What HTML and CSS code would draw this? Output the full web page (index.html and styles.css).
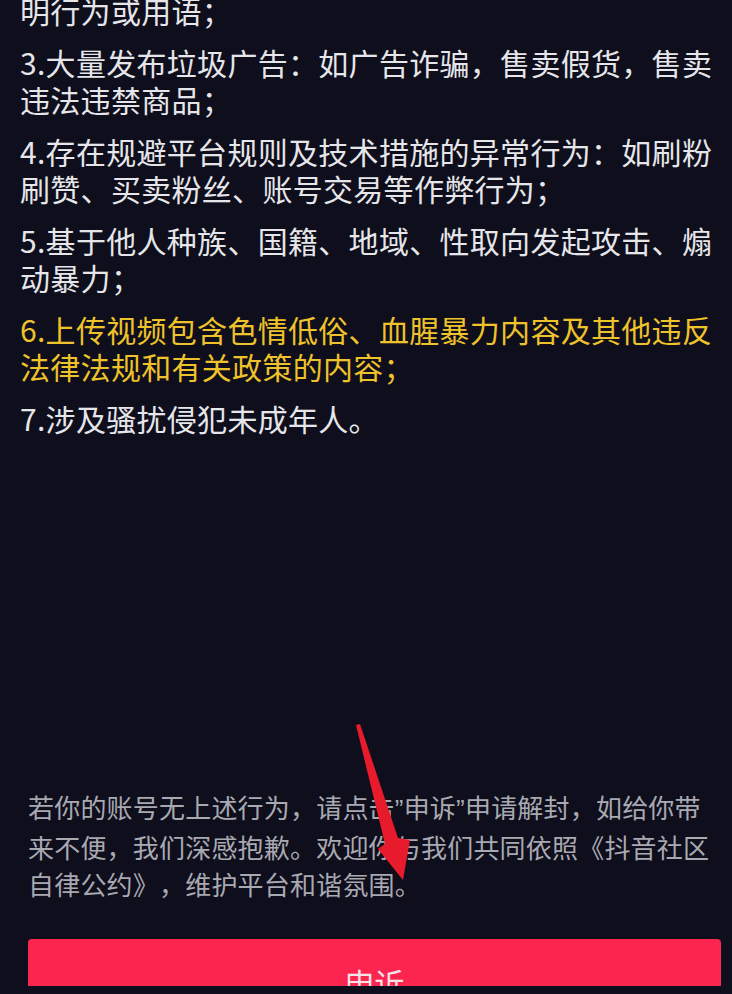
FILE: index.html
```html
<!DOCTYPE html>
<html lang="zh-CN">
<head>
    <meta charset="UTF-8">
    <meta name="viewport" content="width=device-width, initial-scale=1.0">
    <title>账号封禁说明</title>
    <link rel="stylesheet" href="styles.css">
</head>
<body>

<div class="page">
    <div class="rules">
        <p>明行为或用语；</p>
        <p>3.大量发布垃圾广告：如广告诈骗，售卖假货，售卖违法违禁商品；</p>
        <p>4.存在规避平台规则及技术措施的异常行为：如刷粉刷赞、买卖粉丝、账号交易等作弊行为；</p>
        <p>5.基于他人种族、国籍、地域、性取向发起攻击、煽动暴力；</p>
        <p class="highlight">6.上传视频包含色情低俗、血腥暴力内容及其他违反法律法规和有关政策的内容；</p>
        <p>7.涉及骚扰侵犯未成年人。</p>
    </div>

    <div class="notice">
        若你的账号无上述行为，请点击<span class="quote">”</span>申诉<span class="quote">”</span>申请解封，如给你带来不便，我们深感抱歉。欢迎你与我们共同依照《抖音社区自律公约》，维护平台和谐氛围。
    </div>

    <button class="appeal-button">申诉</button>

    <svg class="arrow" width="90" height="175" viewBox="0 0 90 175">
        <polygon points="16,8 20,7 58,121 70,123 63,163 38,132 45,127" fill="#e81b2c"/>
    </svg>
</div>

</body>
</html>
```

FILE: styles.css
```css
body {
    margin: 0;
    background-color: #0e0e1c;
    font-family: "Noto Sans CJK SC", "Noto Sans", sans-serif;
    text-spacing-trim: space-all;
    overflow: hidden;
}
.page {
    position: relative;
    height: 994px;
}
.rules {
    margin-top: -8px;
    padding: 0 12px 0 20px;
    font-size: 30px;
    line-height: 37px;
    letter-spacing: 0.3px;
    color: #e6e6ea;
}
.rules p {
    margin: 0 0 15px;
}
.rules .highlight {
    color: #eec22a;
}
.notice {
    margin-top: 351px;
    padding: 0 20px 0 28px;
    font-size: 26px;
    line-height: 37px;
    letter-spacing: 0.2px;
    color: #a9a9b2;
}
.notice .quote {
    font-family: "Liberation Sans", sans-serif;
}
.appeal-button {
    display: block;
    width: 693px;
    margin: 37px 0 0 28px;
    padding: 21px 0 37px;
    border: none;
    border-radius: 4px;
    background-color: #fb2550;
    color: #f4e4e8;
    font-family: "Noto Sans CJK SC", sans-serif;
    font-size: 30px;
    line-height: 44px;
}
.arrow {
    position: absolute;
    left: 340px;
    top: 725px;
}
```
